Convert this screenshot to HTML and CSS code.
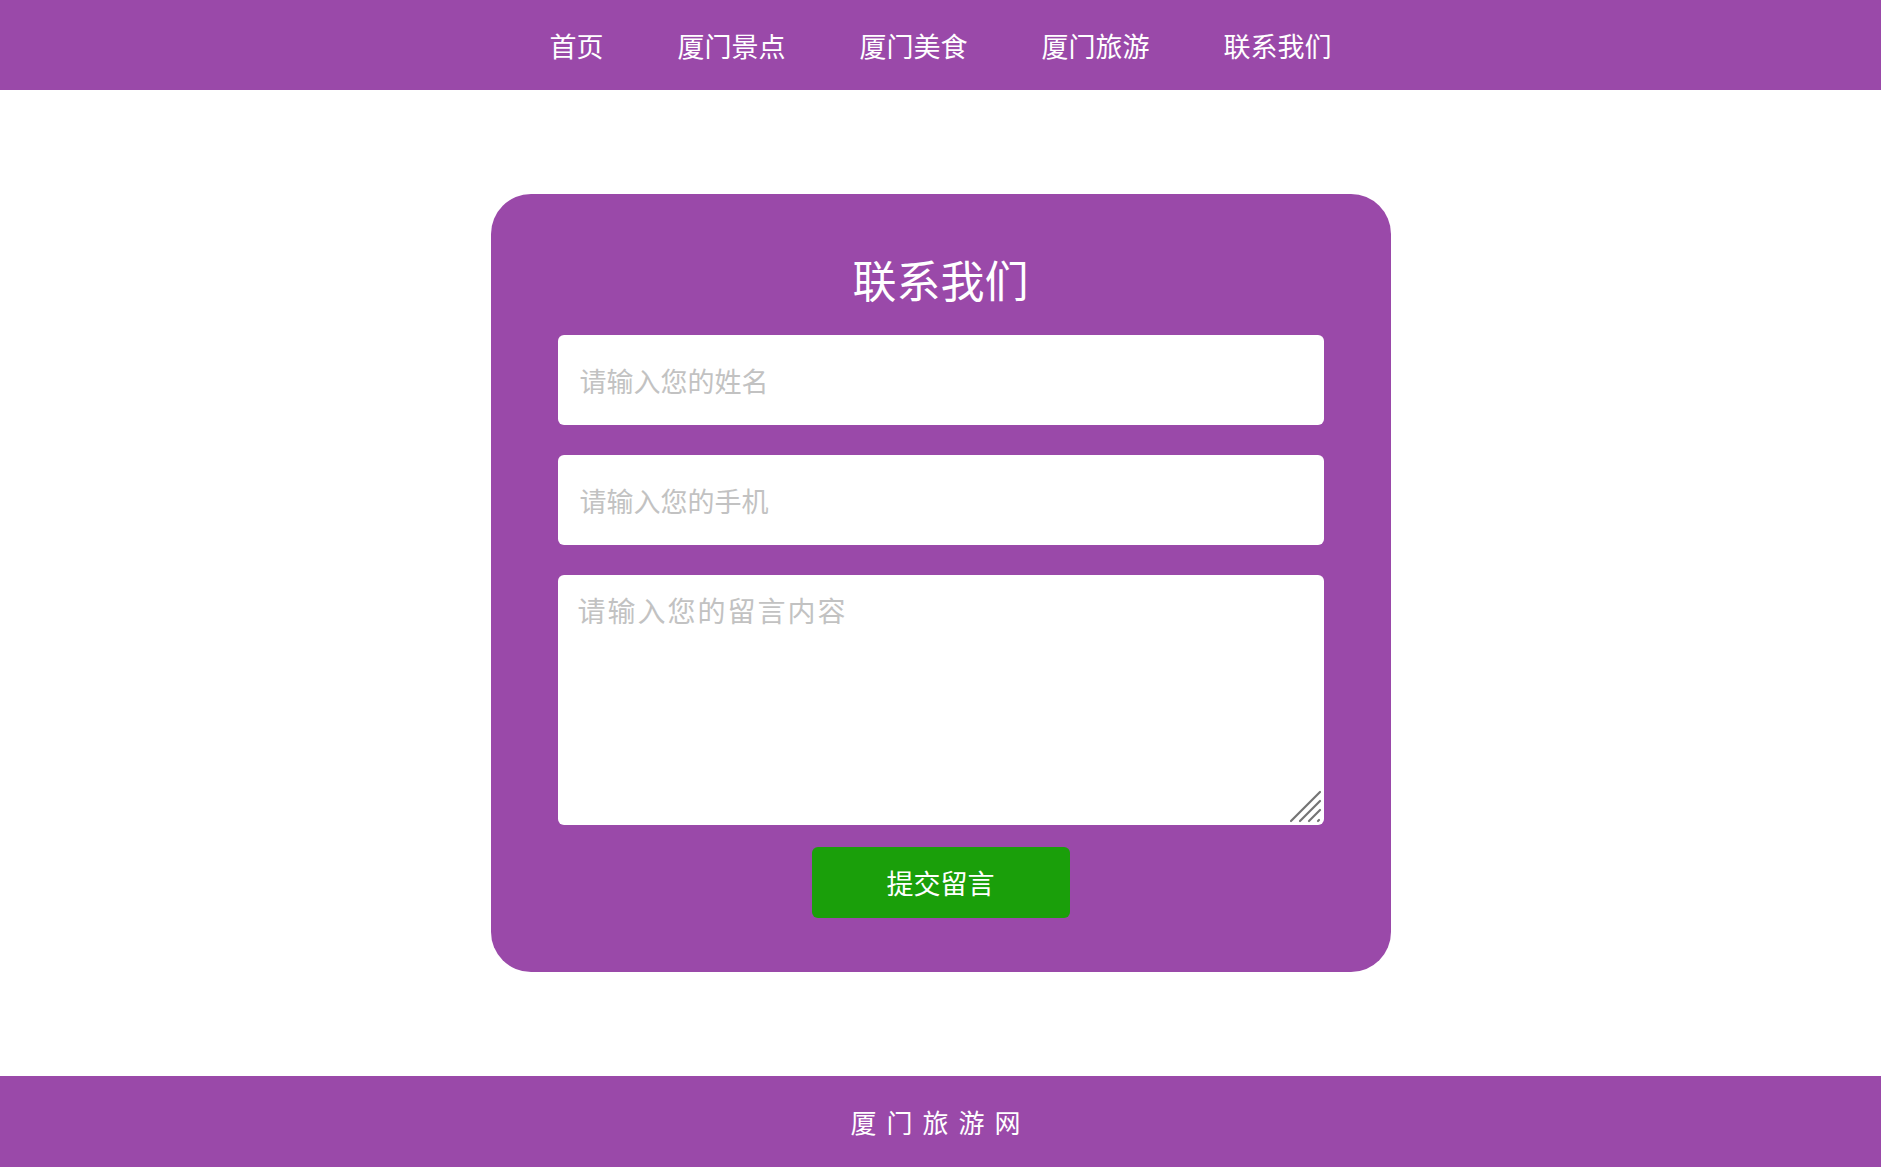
FILE: index.html
```
<!DOCTYPE html>
<html lang="zh-CN">
<head>
  <meta charset="utf-8">
  <meta name="viewport" content="width=device-width">
  <title>联系我们 - 厦门旅游网</title>
  <link rel="stylesheet" href="styles.css">
</head>
<body>
  <!-- 导航 -->
  <nav class="nav-bar">
    <ul>
      <li><a href="#">首页</a></li>
      <li><a href="#">厦门景点</a></li>
      <li><a href="#">厦门美食</a></li>
      <li><a href="#">厦门旅游</a></li>
      <li><a href="#">联系我们</a></li>
    </ul>
  </nav>

  <!-- 留言表单 -->
  <main class="content">
    <form class="contact-box">
      <h2>联系我们</h2>
      <input class="field" type="text" placeholder="请输入您的姓名">
      <input class="field" type="text" placeholder="请输入您的手机">
      <div class="message-wrap">
        <textarea class="message" placeholder="请输入您的留言内容"></textarea>
        <svg class="grip" width="34" height="34" viewBox="0 0 34 34">
          <g stroke="#747474" stroke-width="2.2" stroke-linecap="round">
            <line x1="3" y1="32" x2="32" y2="3"/>
            <line x1="12" y1="32" x2="32" y2="12"/>
            <line x1="21" y1="32" x2="32" y2="21"/>
            <line x1="30" y1="32" x2="31" y2="31"/>
          </g>
        </svg>
      </div>
      <button class="submit-btn" type="button">提交留言</button>
    </form>
  </main>

  <footer class="footer">厦门旅游网</footer>
</body>
</html>
```
FILE: styles.css
```
/* 基础 */
* {
  margin: 0;
  padding: 0;
  box-sizing: border-box;
}

body {
  font-family: "Noto Sans CJK SC", "Noto Sans", sans-serif;
  background-color: #fff;
  color: #fff;
}

/* 导航 */
.nav-bar {
  height: 90px;
  padding-top: 3px;
  background-color: #9a49a9;
  display: flex;
  align-items: center;
  justify-content: center;
}

.nav-bar ul {
  list-style: none;
  display: flex;
}

.nav-bar li {
  margin: 0 37px;
}

.nav-bar a {
  color: #fff;
  text-decoration: none;
  font-size: 27px;
  line-height: 1;
}

/* 内容区 */
.content {
  padding: 104px 0;
  display: flex;
  justify-content: center;
}

.contact-box {
  width: 900px;
  height: 778px;
  background-color: #9a49a9;
  border-radius: 40px;
  padding: 63px 67px 54px;
  display: flex;
  flex-direction: column;
}

.contact-box h2 {
  font-size: 44px;
  font-weight: normal;
  line-height: 1;
  text-align: center;
  margin-bottom: 34px;
}

.field {
  width: 100%;
  height: 90px;
  border: none;
  border-radius: 6px;
  padding: 0 22px;
  font-family: inherit;
  font-size: 27px;
  color: #333;
  margin-bottom: 30px;
  outline: none;
}

.message-wrap {
  position: relative;
  height: 250px;
}

.message {
  display: block;
  width: 100%;
  height: 100%;
  border: none;
  border-radius: 6px;
  padding: 15px 20px;
  font-family: "Noto Sans CJK SC", serif;
  font-size: 28px;
  letter-spacing: 2px;
  color: #333;
  resize: none;
  outline: none;
}

/* 右下角拖拽标记 */
.grip {
  position: absolute;
  right: 2px;
  bottom: 2px;
  pointer-events: none;
}

.field::placeholder,
.message::placeholder {
  color: #c2c2c2;
}

.submit-btn {
  align-self: center;
  width: 258px;
  height: 71px;
  margin-top: 22px;
  border: none;
  border-radius: 6px;
  background-color: #1a9f0a;
  color: #fff;
  font-family: inherit;
  font-size: 27px;
  cursor: pointer;
}

/* 页脚 */
.footer {
  height: 91px;
  line-height: 91px;
  background-color: #9a49a9;
  text-align: center;
  font-size: 26px;
  letter-spacing: 10px;
}
```
